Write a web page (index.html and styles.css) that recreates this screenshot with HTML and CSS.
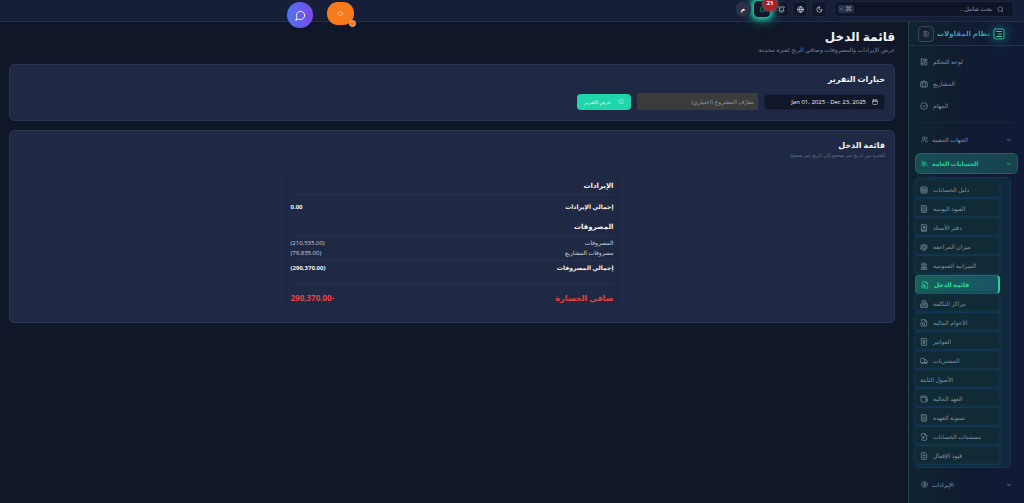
FILE: index.html
```html
<!DOCTYPE html>
<html lang="ar" dir="rtl">
<head>
  <meta charset="UTF-8">
  <meta name="viewport" content="width=device-width, initial-scale=1.0">
  <title>قائمة الدخل - نظام المقاولات</title>
  <link rel="stylesheet" href="styles.css">
</head>
<body>
  <header class="topbar">
    <label class="search">
      <svg class="icon" viewBox="0 0 24 24"><circle cx="11" cy="11" r="8"/><path d="m21 21-4.3-4.3"/></svg>
      <input type="search" placeholder="بحث شامل..." aria-label="بحث شامل">
      <kbd dir="ltr">‹ ⌘</kbd>
    </label>
    <button class="tool" aria-label="الوضع الليلي"><svg class="icon" viewBox="0 0 24 24"><path d="M12 3a6 6 0 0 0 9 9 9 9 0 1 1-9-9Z"/></svg></button>
    <button class="tool" aria-label="اللغة"><svg class="icon" viewBox="0 0 24 24"><circle cx="12" cy="12" r="10"/><path d="M12 2a15 15 0 0 0 0 20 15 15 0 0 0 0-20M2 12h20"/></svg></button>
    <button class="tool" aria-label="التنبيهات"><svg class="icon" viewBox="0 0 24 24"><path d="M6 8a6 6 0 0 1 12 0c0 7 3 9 3 9H3s3-2 3-9M10 21h4M4 2 2 5M20 2l2 3"/></svg></button>
    <button class="tool glow" aria-label="الإشعارات"><svg class="icon" viewBox="0 0 24 24"><path d="M6 8a6 6 0 0 1 12 0c0 7 3 9 3 9H3s3-2 3-9M10 21h4"/></svg><span class="badge">21</span></button>
    <button class="avatar">م</button>
  </header>

  <div class="floating" dir="ltr">
    <button class="chat" aria-label="المحادثة"><svg class="icon" viewBox="0 0 24 24"><path d="M7.900 20A9 9 0 1 0 4 16.100L2 22Z"/></svg></button>
    <button class="dev" aria-label="أدوات المطور"><svg class="icon" viewBox="0 0 24 24"><path d="m8 7-5 5 5 5M16 7l5 5-5 5M10 6l4-1M10 19l4-1"/></svg><span class="dot"></span></button>
  </div>

  <div class="layout">
    <aside class="sidebar" dir="ltr">
      <div class="brand">
        <button class="collapse" aria-label="طي القائمة"><svg class="icon" viewBox="0 0 24 24"><rect x="3" y="3" width="18" height="18" rx="2"/><path d="M9 3v18M16 9l-3 3 3 3"/></svg></button>
        <span class="brand-name">نظام المقاولات</span>
        <svg class="logo" viewBox="0 0 24 24"><rect x="2" y="2" width="20" height="20" rx="2"/><path d="M7 7h10M10 12h7M7 17h10"/></svg>
      </div>

      <nav>
        <ul class="menu">
          <li><a href="#"><svg class="icon" viewBox="0 0 24 24"><rect x="3" y="3" width="7" height="9" rx="1"/><rect x="14" y="3" width="7" height="5" rx="1"/><rect x="14" y="12" width="7" height="9" rx="1"/><rect x="3" y="16" width="7" height="5" rx="1"/></svg>لوحة التحكم</a></li>
          <li><a href="#"><svg class="icon" viewBox="0 0 24 24"><rect x="2" y="6" width="20" height="15" rx="2"/><path d="M8 21V5a2 2 0 0 1 2-2h4a2 2 0 0 1 2 2v16"/></svg>المشاريع</a></li>
          <li><a href="#"><svg class="icon" viewBox="0 0 24 24"><circle cx="12" cy="12" r="10"/><path d="m8 12 3 3 5-6"/></svg>المهام</a></li>
        </ul>

        <button class="group"><svg class="icon" viewBox="0 0 24 24"><circle cx="9" cy="7" r="4"/><path d="M2 21v-2a5 5 0 0 1 5-5h4a5 5 0 0 1 5 5v2M17 3a4 4 0 0 1 0 8M22 21v-2a4 4 0 0 0-3-4"/></svg><span>الجهات المعنية</span><svg class="chevron" viewBox="0 0 24 24"><path d="m6 9 6 6 6-6"/></svg></button>
        <button class="group open"><svg class="icon" viewBox="0 0 24 24"><path d="m16 6 4 14M12 6v14M8 8v12M4 4v16"/></svg><span>الحسابات العامة</span><svg class="chevron" viewBox="0 0 24 24"><path d="m6 9 6 6 6-6"/></svg></button>

        <ul class="submenu">
          <li><a href="#"><svg class="icon" viewBox="0 0 24 24"><rect x="3" y="3" width="18" height="18" rx="2"/><path d="M3 9h18M3 15h18M9 9v12M15 9v12"/></svg>دليل الحسابات</a></li>
          <li><a href="#"><svg class="icon" viewBox="0 0 24 24"><rect x="4" y="2" width="16" height="20" rx="2"/><path d="M8 6h8M8 11h1M12 11h1M16 11v7M8 15h1M12 15h1M8 18h4"/></svg>القيود اليومية</a></li>
          <li><a href="#"><svg class="icon" viewBox="0 0 24 24"><rect x="4" y="2" width="16" height="20" rx="2"/><circle cx="12" cy="9" r="3"/><path d="M8 16a4 4 0 0 1 8 0M4 19h16"/></svg>دفتر الأستاذ</a></li>
          <li><a href="#"><svg class="icon" viewBox="0 0 24 24"><path d="m16 16 3-8 3 8c-2 2-4 2-6 0ZM2 16l3-8 3 8c-2 2-4 2-6 0ZM7 21h10M12 3v18M3 7h2c2 0 5-1 7-2 2 1 5 2 7 2h2"/></svg>ميزان المراجعة</a></li>
          <li><a href="#"><svg class="icon" viewBox="0 0 24 24"><path d="M3 22h18M6 18v-7M10 18v-7M14 18v-7M18 18v-7M4 18h16M12 2l8 5H4Z"/></svg>الميزانية العمومية</a></li>
          <li><a href="#" class="current" aria-current="page"><svg class="icon" viewBox="0 0 24 24"><path d="M4 8V4a2 2 0 0 1 2-2h9l5 5v13a2 2 0 0 1-2 2h-5M14 2v5h6"/><circle cx="7" cy="16" r="5"/><path d="M7 11v5h5"/></svg>قائمة الدخل</a></li>
          <li><a href="#"><svg class="icon" viewBox="0 0 24 24"><path d="M6 22V4a2 2 0 0 1 2-2h8a2 2 0 0 1 2 2v18ZM6 12H4a2 2 0 0 0-2 2v8h4M18 9h2a2 2 0 0 1 2 2v11h-4M10 6h4M10 10h4M10 14h4M10 18h4"/></svg>مراكز التكلفة</a></li>
          <li><a href="#"><svg class="icon" viewBox="0 0 24 24"><path d="M4 7V4a2 2 0 0 1 2-2h9l5 5v13a2 2 0 0 1-2 2h-4M14 2v5h6"/><circle cx="8" cy="16" r="6"/><path d="M8 13v3l2 1"/></svg>الأعوام المالية</a></li>
          <li><a href="#"><svg class="icon" viewBox="0 0 24 24"><rect x="4" y="2" width="16" height="20" rx="1"/><path d="M15 8h-4a2 2 0 0 0 0 4h2a2 2 0 0 1 0 4H9M12 6v12"/></svg>الفواتير</a></li>
          <li><a href="#"><svg class="icon" viewBox="0 0 24 24"><path d="M14 18V6a2 2 0 0 0-2-2H4a2 2 0 0 0-2 2v11a1 1 0 0 0 1 1h2M15 18H9M19 18h2a1 1 0 0 0 1-1v-4l-4-5h-4"/><circle cx="17" cy="18" r="2"/><circle cx="7" cy="18" r="2"/></svg>المشتريات</a></li>
          <li><a href="#">الأصول الثابتة</a></li>
          <li><a href="#"><svg class="icon" viewBox="0 0 24 24"><path d="M19 7V4a1 1 0 0 0-1-1H5a2 2 0 0 0 0 4h15a1 1 0 0 1 1 1v4M3 5v14a2 2 0 0 0 2 2h15a1 1 0 0 0 1-1v-4M22 12h-4a2 2 0 0 0 0 4h4Z"/></svg>العهد المالية</a></li>
          <li><a href="#"><svg class="icon" viewBox="0 0 24 24"><rect x="4" y="2" width="16" height="20" rx="2"/><path d="M8 6h8M8 11h1M12 11h1M16 11v7M8 15h1M12 15h1M8 18h4"/></svg>تسوية العهدة</a></li>
          <li><a href="#"><svg class="icon" viewBox="0 0 24 24"><path d="M4 9V4a2 2 0 0 1 2-2h9l5 5v13a2 2 0 0 1-2 2H9M14 2v5h6M3 21l9-9M6 12h6v6"/></svg>مستندات الحسابات</a></li>
          <li><a href="#"><svg class="icon" viewBox="0 0 24 24"><path d="M15 2H6a2 2 0 0 0-2 2v16a2 2 0 0 0 2 2h12a2 2 0 0 0 2-2V7ZM9 10h6M12 7v6M9 17h6"/></svg>قيود الإقفال</a></li>
        </ul>

        <button class="group"><svg class="icon" viewBox="0 0 24 24"><circle cx="12" cy="12" r="10"/><path d="M15 8h-4a2 2 0 0 0 0 4h2a2 2 0 0 1 0 4H9M12 6v12"/></svg><span>الإيرادات</span><svg class="chevron" viewBox="0 0 24 24"><path d="m6 9 6 6 6-6"/></svg></button>
      </nav>
    </aside>

    <main>
      <h1>قائمة الدخل</h1>
      <p class="intro">عرض الإيرادات والمصروفات وصافي الربح لفترة محددة.</p>

      <section class="card">
        <h2>خيارات التقرير</h2>
        <form class="filters">
          <button type="button" class="date"><svg class="icon" viewBox="0 0 24 24"><rect x="3" y="4" width="18" height="18" rx="2"/><path d="M8 2v4M16 2v4M3 10h18"/></svg><span dir="ltr">Jan 01, 2025 - Dec 23, 2025</span></button>
          <input type="text" class="project" placeholder="معرّف المشروع (اختياري)" aria-label="معرّف المشروع">
          <button type="button" class="show"><svg class="icon" viewBox="0 0 24 24"><path d="M20 15V5a2 2 0 0 0-2-2H7a3 3 0 0 0-3 3v8a3 3 0 0 0 3 3h9M16 14l5 6"/></svg>عرض التقرير</button>
        </form>
      </section>

      <section class="card">
        <h2>قائمة الدخل</h2>
        <p class="period">للفترة من تاريخ غير صحيح إلى تاريخ غير صحيح</p>
        <div class="report">
          <table>
            <tbody>
              <tr class="head"><th colspan="2">الإيرادات</th></tr>
            </tbody>
            <tbody>
              <tr class="total first"><th>إجمالي الإيرادات</th><td>0.00</td></tr>
              <tr class="head"><th colspan="2">المصروفات</th></tr>
            </tbody>
            <tbody>
              <tr class="line"><th>المصروفات</th><td>(210,535.00)</td></tr>
              <tr class="line"><th>مصروفات المشاريع</th><td>(79,835.00)</td></tr>
            </tbody>
            <tbody>
              <tr class="total"><th>إجمالي المصروفات</th><td>(290,370.00)</td></tr>
            </tbody>
            <tbody>
              <tr class="net"><th>صافي الخسارة</th><td>-290,370.00</td></tr>
            </tbody>
          </table>
        </div>
      </section>
    </main>
  </div>
</body>
</html>
```
FILE: styles.css
```css
* {
  box-sizing: border-box;
}

body {
  margin: 0;
  min-height: 100vh;
  display: flex;
  flex-direction: column;
  background-color: #0f1728;
  color: #f1f5f9;
  font-family: "Open Sans", "DejaVu Sans", sans-serif;
  font-size: 6px;
}

h1, h2, p, ul {
  margin: 0;
  padding: 0;
}

ul {
  list-style: none;
}

a {
  color: inherit;
  text-decoration: none;
}

button, input {
  font: inherit;
  color: inherit;
  border: none;
  padding: 0;
}

svg {
  fill: none;
  stroke: currentColor;
  stroke-width: 2;
  stroke-linecap: round;
  stroke-linejoin: round;
  flex: none;
}

.icon {
  width: 8px;
  height: 8px;
}

/* top bar */
.topbar {
  display: flex;
  align-items: center;
  gap: 3px;
  height: 22px;
  padding: 0 10px 3px;
  background-color: #171f38;
  border-bottom: 1px solid #232d48;
}

.search {
  display: flex;
  align-items: center;
  gap: 5px;
  width: 180px;
  height: 16px;
  padding: 0 9px 0 3px;
  background-color: #0f1528;
  border: 1px solid #1d2640;
  border-radius: 4px;
  color: #8c97aa;
}

.search .icon {
  width: 7px;
  height: 7px;
}

.search input {
  flex: 1;
  min-width: 0;
  background: none;
  outline: none;
}

input::placeholder {
  color: inherit;
  opacity: 1;
}

kbd {
  padding: 0 2px;
  background-color: #263247;
  border-radius: 2px;
  font: 7px/8px "DejaVu Sans", sans-serif;
}

.tool, .avatar {
  display: grid;
  place-items: center;
  position: relative;
  width: 16px;
  height: 16px;
  background-color: #101729;
  border: 1px solid #1e2740;
  border-radius: 4px;
}

.search + .tool {
  margin-right: 4px;
}

.tool .icon {
  width: 7px;
  height: 7px;
}

.glow {
  z-index: 1;
  color: #16a08c;
  border-color: #101729;
  box-shadow: 0 0 5px 2px #1fd6a8, 0 0 12px 3px #1a8f80;
}

.badge {
  position: absolute;
  top: -5px;
  left: 8px;
  width: 14px;
  height: 14px;
  border-radius: 50%;
  background-color: #a3262c;
  box-shadow: 0 0 2px 1px #7b4f57;
  color: #fff;
  line-height: 13px;
  font-weight: bold;
}

.avatar {
  z-index: 2;
  border-radius: 50%;
  background-color: #2a3247;
  font-weight: bold;
}

/* floating buttons */
.floating {
  position: absolute;
  top: 2px;
  left: 287px;
  display: flex;
  gap: 14px;
  color: #fff;
}

.chat {
  display: grid;
  place-items: center;
  width: 26px;
  height: 26px;
  border-radius: 50%;
  background: linear-gradient(90deg, #4f73f0, #7c48e8);
}

.chat .icon {
  width: 11px;
  height: 11px;
}

.dev {
  display: grid;
  place-items: center;
  position: relative;
  width: 27px;
  height: 23px;
  border-radius: 11px;
  background-color: #f97a1c;
}

.dev .icon {
  width: 7px;
  height: 7px;
}

.dot {
  position: absolute;
  right: -2px;
  bottom: -2px;
  width: 7px;
  height: 7px;
  border: 1px solid #d8b49c;
  border-radius: 50%;
  background-color: #f97a1c;
}

.layout {
  display: flex;
  flex: 1;
}

/* sidebar */
.sidebar {
  width: 116px;
  background: linear-gradient(90deg, #0f2430, #111b31 50%, #111b38);
  border-left: 1px solid #23454e;
  color: #8290a2;
}

.brand {
  display: flex;
  align-items: center;
  gap: 3px;
  height: 24px;
  padding: 0 19px 0 9px;
  border-bottom: 1px solid #1b3342;
}

.collapse {
  display: grid;
  place-items: center;
  width: 17px;
  height: 16px;
  background-color: #152134;
  border: 1px solid #3a465a;
  border-radius: 4px;
}

.collapse .icon {
  width: 6px;
  height: 6px;
}

.brand-name {
  flex: 1;
  font-size: 7px;
  font-weight: bold;
  text-align: center;
  white-space: nowrap;
  background: linear-gradient(90deg, #20cf9d, #4b80dc 50%, #22c99b);
  background-clip: text;
  color: transparent;
}

.logo {
  width: 12px;
  height: 12px;
  color: #1fd6a0;
  border-radius: 4px;
  box-shadow: 0 0 9px 3px #174057;
}

.menu {
  margin: 0 10px 6px;
  padding: 5px 0;
  border-bottom: 1px solid #16293a;
}

.menu a {
  display: flex;
  align-items: center;
  gap: 5px;
  height: 22px;
  padding: 0 1px;
}

.group {
  display: flex;
  align-items: center;
  gap: 4px;
  width: calc(100% - 12px);
  height: 21px;
  margin: 0 6px 3px;
  padding: 0 5px;
  background: none;
  border: 1px solid transparent;
  border-radius: 5px;
}

.group span {
  flex: 1;
  text-align: left;
}

.group .icon {
  width: 7px;
  height: 7px;
}

.group .chevron {
  width: 6px;
  height: 6px;
  stroke-width: 3;
}

.group.open {
  background: linear-gradient(90deg, #174d56, #17434d);
  border-color: #1d6266;
  color: #20d6a0;
  font-weight: bold;
}

.submenu {
  margin: 0 13px 6px 6px;
  padding: 2px 10px 2px 0;
  background-color: #10293b;
  border: 1px solid #1b3147;
  border-left: none;
  border-radius: 4px;
}

.submenu a {
  display: flex;
  align-items: center;
  gap: 5px;
  height: 19px;
  padding: 0 5px;
  background-color: #102b35;
  border-radius: 4px;
  box-shadow: inset 0 -1px 3px #173b5c, 0 0 5px #173b5c;
}

.submenu .current {
  background: linear-gradient(90deg, #166159, #195463);
  border: 1px solid #1d6f6c;
  border-right: 2px solid #21d6a3;
  box-shadow: none;
  color: #20e0a2;
  font-weight: bold;
}

/* page */
main {
  flex: 1;
  min-width: 0;
  padding: 7px 13px 10px 9px;
}

h1 {
  font-size: 12px;
  line-height: 16px;
}

.intro {
  color: #7482a0;
  line-height: 10px;
}

.card {
  margin-top: 9px;
  padding: 8px 9px 10px;
  background-color: #1f2943;
  border: 1px solid #293450;
  border-radius: 5px;
}

h2 {
  font-size: 8px;
  line-height: 12px;
}

.filters {
  display: flex;
  align-items: center;
  gap: 6px;
  margin-top: 8px;
}

.date {
  display: flex;
  align-items: center;
  gap: 6px;
  width: 121px;
  height: 16px;
  padding: 0 6px;
  background-color: #0f1728;
  border: 1px solid #18223a;
  border-radius: 4px;
  font-weight: 500;
}

.date .icon, .show .icon {
  width: 6px;
  height: 6px;
}

.project {
  width: 121px;
  height: 17px;
  padding: 0 4px;
  background-color: #3b3b3b;
  color: #8a93a3;
}

.show {
  display: flex;
  align-items: center;
  justify-content: space-between;
  width: 54px;
  height: 16px;
  padding: 0 7px;
  background-color: #1fd6ac;
  border-radius: 4px;
  font-size: 5px;
  white-space: nowrap;
}

.period {
  color: #66738c;
  font-size: 5px;
  line-height: 8px;
}

.report {
  max-width: 343px;
  margin: 10px auto 0;
  padding: 8px 9px 1px;
  border: 1px solid #242e49;
  border-radius: 5px;
}

table {
  width: 100%;
  border-collapse: collapse;
}

tbody + tbody {
  border-top: 1px solid #27314c;
}

th, td {
  padding: 0;
  text-align: right;
}

td {
  text-align: left;
}

.head th {
  height: 16px;
  font-size: 7px;
}

.total th, .total td {
  height: 24px;
  padding-bottom: 8px;
  font-weight: bold;
}

.first th, .first td {
  height: 25px;
  padding-bottom: 0;
}

.line th, .line td {
  height: 10px;
  font-weight: normal;
  color: #cbd3df;
}

.line:first-child th, .line:first-child td {
  height: 13px;
  padding-top: 3px;
}

.line:last-child th, .line:last-child td {
  height: 12px;
  padding-bottom: 2px;
}

.net th, .net td {
  height: 26px;
  font-size: 8px;
  font-weight: bold;
  color: #e8423f;
}
```
